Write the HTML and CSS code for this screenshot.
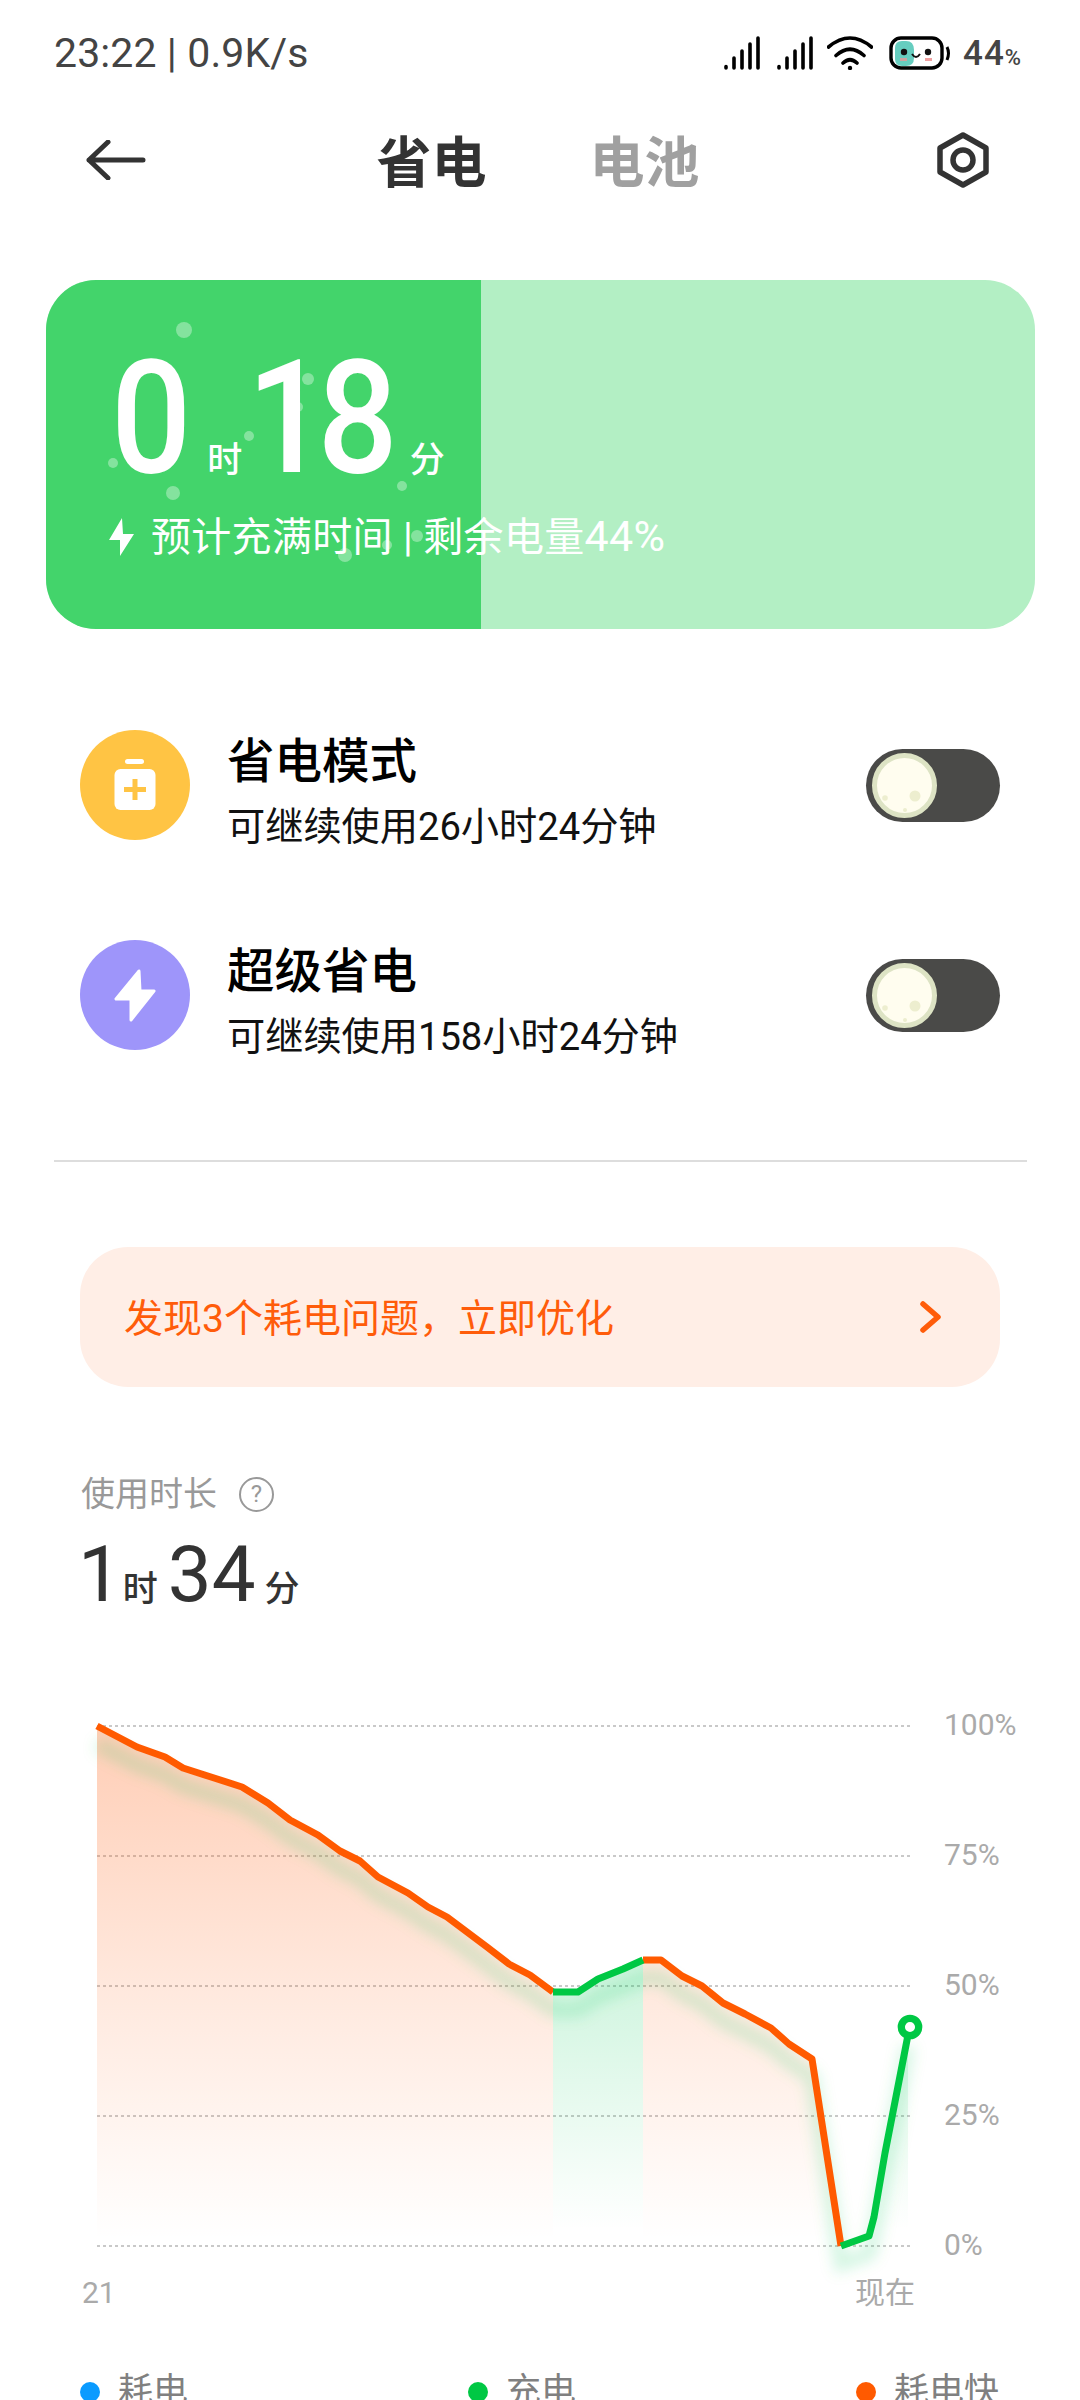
FILE: index.html
```html
<!DOCTYPE html>
<html lang="zh-CN">
<head>
    <meta charset="UTF-8">
    <meta name="viewport" content="width=device-width, initial-scale=1.0">
    <title>省电</title>
    <link rel="stylesheet" href="styles.css">
</head>
<body>

    <div class="status-bar">
        <span class="status-time">23:22 | 0.9K/s</span>
        <div class="status-icons">
            <svg class="signal" width="36" height="34" viewBox="0 0 36 34">
                <path d="M2 30.5V32M10 22V32M18 15V32M26 8V32M34 2V32"/>
            </svg>
            <svg class="signal signal-second" width="36" height="34" viewBox="0 0 36 34">
                <path d="M2 30.5V32M10 22V32M18 15V32M26 8V32M34 2V32"/>
            </svg>
            <svg class="wifi" width="46" height="34" viewBox="0 0 46 34">
                <path d="M1.5 11Q23 -7 44.5 11M9 19.5Q23 7 37 19.5M16 27Q23 20.500 30 27"/>
                <circle cx="23" cy="32" r="2.2"/>
            </svg>
            <svg class="battery" width="62" height="34" viewBox="0 0 62 34">
                <rect x="2" y="2" width="51" height="30" rx="10" fill="#fff" stroke="#000" stroke-width="3.400"/>
                <path d="M6 12Q6 5 13 5H17Q25 5 25 14V22Q25 30 17 30H13Q6 30 6 23Z" fill="#66cdbf"/>
                <circle cx="15" cy="16" r="3.200" fill="#111"/>
                <circle cx="39" cy="16" r="3.200" fill="#111"/>
                <path d="M23 18Q27 24 31 18" fill="none" stroke="#111" stroke-width="2"/>
                <rect x="11" y="22" width="7" height="3" fill="#e59a9a" opacity="0.8"/>
                <rect x="36" y="22" width="7" height="3" fill="#f0a0a0"/>
                <path d="M58 11Q61 17 58 24" fill="none" stroke="#000" stroke-width="3"/>
            </svg>
            <span class="status-battery">44<small>%</small></span>
        </div>
    </div>

    <div class="nav">
        <svg class="nav-back" width="60" height="40" viewBox="0 0 60 40">
            <path d="M22 2L3 20L22 38M3 20H57"/>
        </svg>
        <div class="nav-tabs">
            <span class="nav-tab active">省电</span>
            <span class="nav-tab">电池</span>
        </div>
        <svg class="nav-settings" width="54" height="56" viewBox="0 0 54 56">
            <path d="M27 3L50 16V40L27 53L4 40V16Z"/>
            <circle cx="27" cy="28" r="10"/>
        </svg>
    </div>

    <div class="charge-card">
        <div class="charge-fill" style="width: 44%"></div>
        <svg class="charge-bubbles" width="660" height="349" viewBox="46 280 660 349">
            <circle cx="184" cy="330" r="8"/>
            <circle cx="308" cy="379" r="6"/>
            <circle cx="298" cy="407" r="5"/>
            <circle cx="249" cy="436" r="5"/>
            <circle cx="113" cy="463" r="5"/>
            <circle cx="173" cy="493" r="7"/>
            <circle cx="402" cy="486" r="5"/>
            <circle cx="417" cy="536" r="6"/>
            <circle cx="387" cy="545" r="5"/>
            <circle cx="345" cy="555" r="7"/>
        </svg>
        <div class="charge-content">
            <div class="charge-time">
                <span class="charge-num charge-hours">0</span><span class="charge-unit">时</span><span class="charge-num">18</span><span class="charge-unit charge-unit-end">分</span>
            </div>
            <div class="charge-note">
                <svg class="charge-bolt" width="25" height="38" viewBox="0 0 25 38">
                    <path d="M13 0L0 22H11V38L25 16H14Z"/>
                </svg>
                <span>预计充满时间 | 剩余电量<span class="charge-percent">44%</span></span>
            </div>
        </div>
    </div>

    <div class="mode-list">
        <div class="mode-row">
            <svg class="mode-icon" width="110" height="110" viewBox="0 0 110 110">
                <circle cx="55" cy="55" r="55" fill="#ffc444"/>
                <rect x="45" y="29" width="19" height="5" rx="2.500" fill="#fff"/>
                <rect x="34.500" y="39" width="41" height="41" rx="6" fill="#fff"/>
                <path d="M44 59.500H66M55 49V70" stroke="#ffc444" stroke-width="5"/>
            </svg>
            <div class="mode-text">
                <div class="mode-title">省电模式</div>
                <div class="mode-desc">可继续使用26小时24分钟</div>
            </div>
            <div class="toggle">
                <svg width="65" height="65" viewBox="0 0 65 65">
                    <circle cx="32.500" cy="32.500" r="30" fill="#fffdef" stroke="#dde3c4" stroke-width="5"/>
                    <circle cx="43" cy="43" r="5.500" fill="#edeecf"/>
                    <circle cx="13" cy="45" r="2.800" fill="#edeecf"/>
                    <circle cx="33" cy="57" r="2" fill="#edeecf"/>
                </svg>
            </div>
        </div>
        <div class="mode-row">
            <svg class="mode-icon" width="110" height="110" viewBox="0 0 110 110">
                <circle cx="55" cy="55" r="55" fill="#9e95fa"/>
                <path d="M59 31L36 59H51V80L74 51H60Z" fill="#fff" stroke="#fff" stroke-width="3" stroke-linejoin="round"/>
            </svg>
            <div class="mode-text">
                <div class="mode-title">超级省电</div>
                <div class="mode-desc">可继续使用158小时24分钟</div>
            </div>
            <div class="toggle">
                <svg width="65" height="65" viewBox="0 0 65 65">
                    <circle cx="32.500" cy="32.500" r="30" fill="#fffdef" stroke="#dde3c4" stroke-width="5"/>
                    <circle cx="43" cy="43" r="5.500" fill="#edeecf"/>
                    <circle cx="13" cy="45" r="2.800" fill="#edeecf"/>
                    <circle cx="33" cy="57" r="2" fill="#edeecf"/>
                </svg>
            </div>
        </div>
    </div>

    <div class="divider"></div>

    <div class="issue-banner">
        <span class="issue-text">发现3个耗电问题，立即优化</span>
        <svg width="22" height="32" viewBox="0 0 22 32">
            <path d="M3 3L18 16L3 29"/>
        </svg>
    </div>

    <div class="usage">
        <div class="usage-label">使用时长<span class="usage-help">?</span></div>
        <div class="usage-time">
            <span class="usage-num">1</span><span class="usage-unit usage-hours">时</span><span class="usage-num">34</span><span class="usage-unit">分</span>
        </div>
    </div>

    <svg class="chart" width="1080" height="620" viewBox="0 1700 1080 620">
        <defs>
            <linearGradient id="orangeFade" gradientUnits="userSpaceOnUse" x1="0" y1="1726" x2="0" y2="2240">
                <stop offset="0" stop-color="#ff5a0a" stop-opacity="0.3"/>
                <stop offset="0.5" stop-color="#ff5a0a" stop-opacity="0.14"/>
                <stop offset="1" stop-color="#ff5a0a" stop-opacity="0"/>
            </linearGradient>
            <linearGradient id="greenFade" gradientUnits="userSpaceOnUse" x1="0" y1="1960" x2="0" y2="2230">
                <stop offset="0" stop-color="#00c853" stop-opacity="0.2"/>
                <stop offset="1" stop-color="#00c853" stop-opacity="0"/>
            </linearGradient>
            <filter id="lineBlur" x="-10%" y="-10%" width="120%" height="120%">
                <feGaussianBlur stdDeviation="7"/>
            </filter>
        </defs>

        <path class="grid-line" d="M97 1726H912M97 1856H912M97 1986H912M97 2116H912M97 2246H912"/>

        <polygon fill="url(#orangeFade)" points="97,1726 137,1747 165,1757 183,1768 211,1777 242,1787 268,1803 290,1820 318,1835 340,1851 360,1861 378,1877 408,1893 428,1907 447,1917 487,1947 509,1964 530,1975 553,1992 553,2246 97,2246"/>
        <polygon fill="url(#orangeFade)" points="643,1960 661,1960 682,1976 702,1986 723,2003 745,2014 771,2028 789,2044 812,2059 841,2246 643,2246"/>
        <polygon fill="url(#greenFade)" points="553,1992 578,1992 598,1979 623,1969 643,1960 643,2246 553,2246"/>
        <polygon fill="url(#greenFade)" points="841,2246 869,2236 874,2217 885,2153 908,2028 908,2246"/>

        <polyline class="line-shadow" points="97,1726 137,1747 165,1757 183,1768 211,1777 242,1787 268,1803 290,1820 318,1835 340,1851 360,1861 378,1877 408,1893 428,1907 447,1917 487,1947 509,1964 530,1975 553,1992 578,1992 598,1979 623,1969 643,1960 661,1960 682,1976 702,1986 723,2003 745,2014 771,2028 789,2044 812,2059 841,2246 869,2236 874,2217 885,2153 908,2028"/>

        <polyline class="line-orange" points="97,1726 137,1747 165,1757 183,1768 211,1777 242,1787 268,1803 290,1820 318,1835 340,1851 360,1861 378,1877 408,1893 428,1907 447,1917 487,1947 509,1964 530,1975 553,1992"/>
        <polyline class="line-orange" points="643,1960 661,1960 682,1976 702,1986 723,2003 745,2014 771,2028 789,2044 812,2059 841,2246"/>
        <polyline class="line-green" points="553,1992 578,1992 598,1979 623,1969 643,1960"/>
        <polyline class="line-green" points="841,2246 869,2236 874,2217 885,2153 908,2035"/>
        <circle class="line-end" cx="910" cy="2027" r="8.700"/>

        <text class="chart-label" x="944" y="1735">100%</text>
        <text class="chart-label" x="944" y="1865">75%</text>
        <text class="chart-label" x="944" y="1995">50%</text>
        <text class="chart-label" x="944" y="2125">25%</text>
        <text class="chart-label" x="944" y="2255">0%</text>
        <text class="chart-label" x="82" y="2303">21</text>
        <text class="chart-label" x="855" y="2303">现在</text>
    </svg>

    <div class="legend">
        <div class="legend-item"><span class="legend-dot dot-blue"></span>耗电</div>
        <div class="legend-item"><span class="legend-dot dot-green"></span>充电</div>
        <div class="legend-item"><span class="legend-dot dot-orange"></span>耗电快</div>
    </div>

</body>
</html>
```

FILE: styles.css
```css
body {
    margin: 0;
    width: 1080px;
    height: 2400px;
    overflow: hidden;
    background-color: #fff;
    font-family: Roboto, 'Noto Sans CJK SC', sans-serif;
}
.status-bar {
    height: 106px;
    display: flex;
    justify-content: space-between;
    align-items: center;
    padding: 0 58px 0 54px;
}
.status-time {
    font-size: 41px;
    letter-spacing: 0.1px;
    color: #444;
}
.status-icons {
    display: flex;
    align-items: center;
}
.signal path {
    fill: none;
    stroke: #000;
    stroke-width: 3.6px;
    stroke-linecap: round;
}
.signal-second {
    margin-left: 17px;
}
.wifi {
    margin-left: 14px;
}
.wifi path {
    fill: none;
    stroke: #000;
    stroke-width: 3.6px;
    stroke-linecap: round;
}
.battery {
    margin-left: 16px;
}
.status-battery {
    margin-left: 12px;
    font-size: 35px;
    font-weight: 500;
    letter-spacing: 1px;
    color: #444;
}
.status-battery small {
    font-size: 22px;
}
.nav {
    height: 108px;
    display: grid;
    grid-template-columns: 1fr auto 1fr;
    align-items: center;
    padding: 0 90px 0 86px;
}
.nav-back path {
    fill: none;
    stroke: #333;
    stroke-width: 5px;
    stroke-linecap: round;
    stroke-linejoin: round;
}
.nav-tabs {
    display: flex;
    gap: 103px;
    padding-top: 5px;
}
.nav-tab {
    font-size: 55px;
    line-height: 60px;
    font-weight: 700;
    color: #a0a0a0;
}
.nav-tab.active {
    color: #333;
}
.nav-settings {
    justify-self: end;
}
.nav-settings path, .nav-settings circle {
    fill: none;
    stroke: #333;
    stroke-width: 5.5px;
    stroke-linejoin: round;
}
.charge-card {
    position: relative;
    height: 349px;
    margin: 66px 45px 0 46px;
    border-radius: 50px;
    overflow: hidden;
    background-color: #b3efc4;
}
.charge-fill {
    position: absolute;
    top: 0;
    bottom: 0;
    left: 0;
    background-color: #43d46b;
}
.charge-bubbles {
    position: absolute;
    top: 0;
    left: 0;
}
.charge-bubbles circle {
    fill: rgba(255, 255, 255, 0.35);
}
.charge-content {
    position: relative;
    padding: 58px 0 0 63px;
    color: #fff;
}
.charge-time {
    display: flex;
    align-items: baseline;
    height: 160px;
    margin-left: 2px;
}
.charge-num {
    font-size: 157px;
    line-height: 160px;
    font-weight: 500;
    letter-spacing: -11px;
    transform: scaleX(0.9);
    transform-origin: left;
}
.charge-hours {
    margin-right: 9px;
}
.charge-unit {
    font-size: 35px;
    font-weight: 500;
    margin: 0 5px 0 9px;
}
.charge-unit-end {
    margin-left: 6px;
}
.charge-note {
    display: flex;
    align-items: center;
    gap: 17px;
    margin-top: 14px;
    font-size: 40px;
    line-height: 48px;
    letter-spacing: 0.3px;
}
.charge-percent {
    font-size: 43px;
}
.charge-bolt path {
    fill: #fff;
}
.mode-list {
    display: flex;
    flex-direction: column;
    gap: 100px;
    margin-top: 101px;
    padding: 0 80px;
}
.mode-row {
    height: 110px;
    display: flex;
    align-items: center;
    gap: 37px;
}
.mode-text {
    flex: 1;
    padding-top: 13px;
}
.mode-title {
    font-size: 47.5px;
    line-height: 56px;
    font-weight: 500;
    color: #000;
}
.mode-desc {
    margin-top: 15px;
    font-size: 38.2px;
    line-height: 44px;
    color: #111;
}
.toggle {
    width: 134px;
    height: 73px;
    box-sizing: border-box;
    display: flex;
    align-items: center;
    padding-left: 6px;
    border-radius: 37px;
    background-color: #4a4a48;
}
.toggle svg {
    display: block;
}
.divider {
    height: 2px;
    margin: 110px 53px 0 54px;
    background-color: #ddd;
}
.issue-banner {
    height: 140px;
    display: flex;
    justify-content: space-between;
    align-items: center;
    margin: 85px 80px 0;
    padding: 0 58px 0 44px;
    border-radius: 48px;
    background-color: #ffeee6;
    color: #ff5c0a;
    font-size: 39px;
}
.issue-text {
    margin-bottom: 4px;
}
.issue-banner path {
    fill: none;
    stroke: #ff5c0a;
    stroke-width: 5.5px;
    stroke-linecap: round;
    stroke-linejoin: round;
}
.usage {
    margin-top: 87px;
    padding-left: 81px;
}
.usage-label {
    display: flex;
    align-items: center;
    gap: 22px;
    font-size: 34px;
    line-height: 40px;
    color: #999;
}
.usage-help {
    width: 31px;
    height: 31px;
    display: flex;
    justify-content: center;
    align-items: center;
    border: 2.5px solid #999;
    border-radius: 50%;
    font-size: 24px;
}
.usage-time {
    display: flex;
    align-items: baseline;
    margin-top: 16px;
    margin-left: -3px;
    color: #333;
}
.usage-num {
    font-size: 78px;
    line-height: 90px;
}
.usage-unit {
    margin: 0 10px 0 9px;
    font-size: 35px;
    font-weight: 500;
}
.usage-hours {
    margin-left: 1px;
    margin-right: 10px;
}
.chart {
    display: block;
    margin-top: 80px;
}
.grid-line {
    fill: none;
    stroke: #b8b8b8;
    stroke-width: 1.5px;
    stroke-dasharray: 3 3;
}
.line-shadow {
    fill: none;
    stroke: #00c853;
    stroke-width: 14px;
    stroke-opacity: 0.17;
    filter: url(#lineBlur);
    transform: translateY(18px);
}
.line-orange, .line-green {
    fill: none;
    stroke-width: 7px;
    stroke-linejoin: round;
}
.line-orange {
    stroke: #ff5a00;
}
.line-green {
    stroke: #00c844;
}
.line-end {
    fill: #fff;
    stroke: #00c844;
    stroke-width: 7.300px;
}
.chart-label {
    font-size: 30px;
    fill: #aaa;
}
.legend {
    display: grid;
    grid-template-columns: 388px 388px auto;
    margin-top: 50px;
    padding-left: 80px;
}
.legend-item {
    display: flex;
    align-items: center;
    gap: 18px;
    font-size: 35px;
    line-height: 44px;
    color: #808080;
}
.legend-dot {
    width: 20px;
    height: 20px;
    border-radius: 50%;
}
.dot-blue {
    background-color: #0a9bff;
}
.dot-green {
    background-color: #00c844;
}
.dot-orange {
    background-color: #ff5a00;
}
```
